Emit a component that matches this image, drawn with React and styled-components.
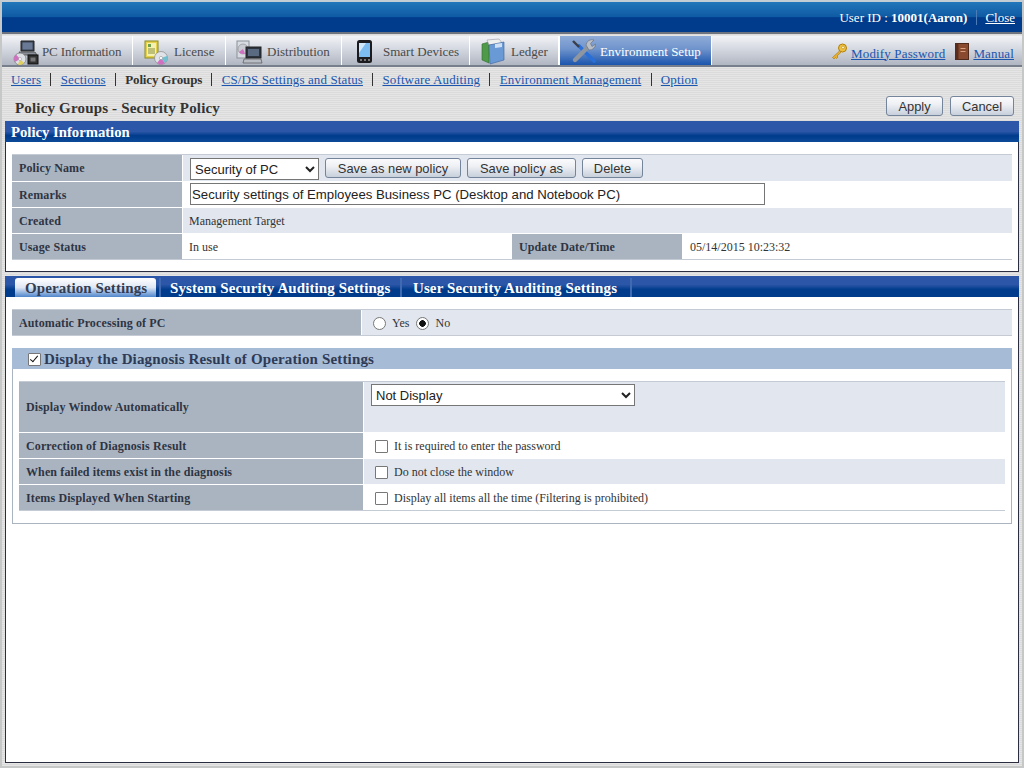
import React from "react";
import styled, { createGlobalStyle } from "styled-components";

const GlobalStyle = createGlobalStyle`
  html, body { margin: 0; padding: 0; background: #dfe0df; }
  body { font-family: "Liberation Serif", "Times New Roman", serif; font-size: 12px; color: #333; }
  a { color: #1a56b0; }
`;

const Page = styled.div`
  width: 1024px;
  height: 768px;
  box-sizing: border-box;
  overflow: hidden;
  display: flex;
  flex-direction: column;
  border: 2px solid #c6c8c8;
  border-top-color: #c4ccd4;
  background: repeating-linear-gradient(0deg, #e4e5e4 0, #e4e5e4 1px, #dadbda 1px, #dadbda 2px);
`;

const TopBar = styled.div`
  height: 32px;
  box-sizing: border-box;
  display: flex;
  justify-content: flex-end;
  align-items: center;
  padding: 1px 7px 0 0;
  color: #fff;
  font-size: 13px;
  border-bottom: 2px solid #6d7480;
  background: linear-gradient(180deg, #2277ba 0, #0f5aa3 50%, #003b8c 52%, #003b8c 100%);
`;

const UserId = styled.span`
  b { font-weight: bold; }
`;

const BarDivider = styled.span`
  width: 1px;
  height: 15px;
  background: #4c7cb8;
  margin: 0 8px 0 9px;
`;

const CloseLink = styled.a`
  color: #fff;
`;

const TabBar = styled.div`
  margin-top: 2px;
  height: 31px;
  box-sizing: border-box;
  display: flex;
  align-items: stretch;
  border-bottom: 2px solid #777f8c;
  background: linear-gradient(180deg, #f2f3f7 0, #d4d8e0 45%, #b0b6c2 100%);
`;

const MainTab = styled.div`
  width: ${p => p.$w}px;
  box-sizing: border-box;
  display: flex;
  align-items: center;
  border-right: 1px solid #fff;
  border-left: ${p => (p.$active ? "1px solid #fff" : "none")};
  color: ${p => (p.$active ? "#fff" : "#4a4a4a")};
  font-size: 13px;
  letter-spacing: ${p => p.$track || 0}px;
  padding: 2px 0 0 ${p => p.$pad}px;
  position: relative;
  background: ${p =>
    p.$active
      ? "linear-gradient(180deg, #90acd8 0, #6f93cc 45%, #1a55ad 100%)"
      : "transparent"};
`;

const TabIcon = styled.svg`
  position: absolute;
  left: ${p => p.$left}px;
  top: 2px;
`;

const TabTools = styled.div`
  margin-left: auto;
  display: flex;
  align-items: center;
  padding: 2px 8px 0 0;
  font-size: 13px;
  letter-spacing: 0.15px;
`;

const ToolLink = styled.a`
  margin-left: ${p => p.$before}px;
  margin-right: ${p => p.$after || 0}px;
  padding-top: 4px;
`;

const SubNav = styled.div`
  height: 24px;
  box-sizing: border-box;
  display: flex;
  align-items: center;
  padding: 1px 0 0 9px;
  font-size: 13px;
  a { letter-spacing: 0.12px; }
`;

const SubItem = styled.span`
  font-weight: bold;
  color: #333;
  letter-spacing: -0.15px;
`;

const SubSep = styled.span`
  width: 1px;
  height: 13px;
  background: #333;
  margin: 0 9.25px;
`;

const TitleRow = styled.div`
  height: 30px;
  display: flex;
  align-items: center;
  justify-content: space-between;
  padding: 0 8px 0 13px;
`;

const PageTitle = styled.h1`
  margin: 0;
  padding-top: 4px;
  font-size: 15px;
  letter-spacing: 0.17px;
  font-weight: bold;
  color: #333;
`;

const TitleActions = styled.div`
  display: flex;
  gap: 7px;
`;

const Btn = styled.button`
  height: 20px;
  width: ${p => p.$w}px;
  padding: 0;
  border: 1px solid #74849a;
  border-radius: 3px;
  font-family: "Liberation Sans", Arial, sans-serif;
  font-size: 12.9px;
  color: #333;
  background: linear-gradient(180deg, #fbfbfc 0, #eef0f4 40%, #c8d0dc 100%);
`;

const SectionHead = styled.div`
  margin: 0 3px;
  height: 21px;
  box-sizing: border-box;
  padding: 1px 0 0 6px;
  display: flex;
  align-items: center;
  color: #fff;
  font-size: 14.7px;
  font-weight: bold;
  background: linear-gradient(180deg, #2c57a8 0, #2c57a8 50%, #003b8c 70%, #0c4a98 100%);
`;

const Panel = styled.div`
  margin: 0 3px;
  background: #fff;
  border-left: 1px solid #2a2e40;
  border-right: 1px solid #2a2e40;
  border-bottom: 1px solid #2a2e40;
  box-sizing: border-box;
  padding: 12px 6px 0;
  ${p => (p.$fill ? "flex: 1; margin-bottom: 3px;" : "height: 130px;")}
`;

const InfoTable = styled.div`
  border-top: 1px solid #c5cbd4;
  border-bottom: 1px solid #c5cbd4;
`;

const Row = styled.div`
  display: flex;
  box-sizing: border-box;
  height: ${p => p.$h || 26}px;
  background: ${p => (p.$alt ? "#e2e7ef" : "#fff")};
  & + & { border-top: 1px solid #fff; }
`;

const Label = styled.div`
  width: ${p => p.$w}px;
  flex: none;
  box-sizing: border-box;
  display: flex;
  align-items: center;
  padding: ${p => (p.$flat ? 0 : 2)}px 0 0 7px;
  background: #aab4c0;
  border-right: 1px solid #fff;
  color: #2e3444;
  font-weight: bold;
  font-size: 12px;
  letter-spacing: 0.12px;
`;

const Value = styled.div`
  flex: ${p => (p.$w ? `0 0 ${p.$w}px` : 1)};
  box-sizing: border-box;
  display: flex;
  align-items: ${p => (p.$top !== undefined ? "flex-start" : "center")};
  gap: ${p => p.$gap || 0}px;
  padding: ${p => p.$top ?? 2}px 0 0 ${p => p.$pad ?? 6}px;
  color: #333;
  font-size: 12px;
`;

const Select = styled.select`
  height: 22px;
  width: ${p => p.$w}px;
  font-family: "Liberation Sans", Arial, sans-serif;
  font-size: 13px;
  color: #222;
  background: #fff;
  border: 1px solid #767676;
  border-radius: 0;
  margin: 0;
`;

const TextInput = styled.input`
  width: 575px;
  height: 22px;
  box-sizing: border-box;
  padding: 0 1px;
  font-family: "Liberation Sans", Arial, sans-serif;
  font-size: 13.2px;
  color: #222;
  border: 1px solid #767676;
  margin: 0;
`;

const TabStrip = styled.div`
  margin: 4px 3px 0;
  height: 21px;
  box-sizing: border-box;
  padding: 2px 0 0 10px;
  display: flex;
  background: linear-gradient(180deg, #2c57a8 0, #2c57a8 40%, #003b8c 65%, #003b8c 100%);
`;

const PolicyTab = styled.div`
  height: 19px;
  box-sizing: border-box;
  display: flex;
  align-items: center;
  padding: 1px 0 0 ${p => p.$pad}px;
  width: ${p => p.$w}px;
  font-size: 15px;
  letter-spacing: 0.1px;
  font-weight: bold;
  color: ${p => (p.$active ? "#333c50" : "#fff")};
  border-right: ${p => (p.$active ? "none" : "2px solid #3f6ab2")};
  border-radius: ${p => (p.$active ? "3px 3px 0 0" : "0")};
  margin-right: ${p => (p.$active ? 3 : 0)}px;
  background: ${p =>
    p.$active ? "linear-gradient(180deg, #fff 0, #dfe7f4 50%, #4f86cc 100%)" : "transparent"};
  &:nth-child(2) { border-left: 2px solid #3f6ab2; }
`;

const RadioField = styled.label`
  display: inline-flex;
  align-items: center;
  gap: 6px;
  margin-right: 7px;
`;

const Radio = styled.input`
  appearance: none;
  margin: 0;
  width: 13px;
  height: 13px;
  border: 1px solid #777;
  border-radius: 50%;
  background: #fff;
  &:checked { background: radial-gradient(circle, #111 0, #111 3px, #fff 3.6px); }
`;

const Check = styled.input`
  appearance: none;
  position: relative;
  margin: 0 ${p => p.$gap ?? 6}px 0 0;
  width: 13px;
  height: 13px;
  box-sizing: border-box;
  border: 1px solid #777;
  border-radius: 1px;
  background: #fff;
  &:checked::after {
    content: "";
    position: absolute;
    left: 3px;
    top: 0;
    width: 4px;
    height: 8px;
    border: solid #111;
    border-width: 0 1.5px 1.5px 0;
    box-sizing: border-box;
    transform: rotate(40deg);
  }
`;

const GroupBox = styled.div`
  margin-top: 12px;
  height: 176px;
  box-sizing: border-box;
  border: 1px solid #aab4c0;
  border-top: none;
`;

const GroupHead = styled.div`
  height: 21px;
  box-sizing: border-box;
  margin: 0 -1px;
  display: flex;
  align-items: center;
  padding: 1px 0 0 16px;
  background: #a5bbd6;
  color: #2e3a55;
  font-size: 15px;
  letter-spacing: 0.15px;
  font-weight: bold;
  label { display: flex; align-items: center; }
`;

const GroupInner = styled.div`
  margin: 12px 6px 0;
`;

const KeyIcon = () => (
  <svg width="17" height="17" viewBox="0 0 17 17">
    <circle cx="11.5" cy="5" r="4" fill="#f0c040" stroke="#b08010" />
    <circle cx="12" cy="4.5" r="1.4" fill="#fff7c8" stroke="#b08010" strokeWidth="0.6" />
    <path d="M8.5 8 L1.5 14.5 L3 16 L4.5 14.5 L5.5 15.5 L7 14 L6 13 L10 9.3 Z" fill="#e8b030" stroke="#b08010" strokeWidth="0.7" />
  </svg>
);

const BookIcon = () => (
  <svg width="14" height="17" viewBox="0 0 14 17">
    <rect x="0.5" y="0.5" width="13" height="16" fill="#8a4a30" stroke="#4d2a1c" />
    <rect x="0.5" y="0.5" width="3" height="16" fill="#5a2e1e" />
    <rect x="5.5" y="5" width="5" height="1" fill="#d8a080" />
    <rect x="5.5" y="8" width="5" height="1" fill="#d8a080" />
  </svg>
);

const PcIcon = () => (
  <TabIcon $left={10} width="28" height="28" viewBox="0 0 28 28">
    <path d="M9 3 H22 V13 H9 Z" fill="#3a4250" stroke="#222" />
    <rect x="10.5" y="4.5" width="10" height="7" fill="#6a7a96" />
    <path d="M7 14 H23 L25 17 H9 Z" fill="#8a8f98" stroke="#444" strokeWidth="0.7" />
    <circle cx="8" cy="21" r="6" fill="#dcdfe4" stroke="#777" strokeWidth="0.7" />
    <path d="M8 21 L4 16.5 A6 6 0 0 0 3 24 Z" fill="#d070c0" />
    <path d="M8 21 L12 25 A6 6 0 0 1 6 26.6 Z" fill="#e0d060" />
    <circle cx="8" cy="21" r="1.5" fill="#fff" stroke="#888" strokeWidth="0.5" />
    <rect x="16" y="17" width="10" height="9" fill="#333" stroke="#111" />
    <rect x="18.5" y="19.5" width="5" height="4" fill="#777" />
  </TabIcon>
);

const LicenseIcon = () => (
  <TabIcon $left={11} width="26" height="28" viewBox="0 0 26 28">
    <rect x="1" y="3" width="13" height="17" fill="#e6d24a" stroke="#8a8a20" />
    <rect x="3" y="5" width="9" height="13" fill="#f4f0b0" />
    <rect x="4" y="6" width="3" height="3" fill="#70a050" />
    <path d="M4 11 H11 M4 13 H11 M4 15 H11" stroke="#8a9040" />
    <circle cx="17" cy="20" r="6.5" fill="#dfe2e6" stroke="#888" strokeWidth="0.7" />
    <path d="M17 20 L13 25 A6.5 6.5 0 0 0 21 25 Z" fill="#d070c0" />
    <path d="M17 20 L21 25 A6.5 6.5 0 0 0 23 18 Z" fill="#70c0d0" />
    <circle cx="17" cy="20" r="1.6" fill="#fff" stroke="#888" strokeWidth="0.5" />
  </TabIcon>
);

const DistributionIcon = () => (
  <TabIcon $left={10} width="28" height="28" viewBox="0 0 28 28">
    <rect x="1" y="3" width="12" height="17" fill="#d8dce2" stroke="#8a8f98" />
    <circle cx="7" cy="11" r="5" fill="#c8ccd2" stroke="#888" strokeWidth="0.6" />
    <path d="M7 11 L3 14 A5 5 0 0 0 9 15.6 Z" fill="#d070c0" />
    <rect x="10" y="9" width="15" height="11" fill="#2c3440" stroke="#222" />
    <rect x="12" y="11" width="11" height="7" fill="#5a6a80" />
    <path d="M8 21 H25 L26 25 H7 Z" fill="#b8bcc4" stroke="#555" strokeWidth="0.7" />
  </TabIcon>
);

const PhoneIcon = () => (
  <TabIcon $left={14} width="18" height="26" viewBox="0 0 18 26">
    <rect x="1" y="2" width="15" height="23" rx="2.5" fill="#1c1c20" />
    <path d="M3 5 H14 V19 H3 Z" fill="#7cbcf0" />
    <path d="M3 5 H10 L3 15 Z" fill="#cfe8fb" />
    <rect x="4" y="21" width="2" height="2" fill="#777" />
    <rect x="8" y="21" width="2" height="2" fill="#777" />
    <rect x="12" y="21" width="2" height="2" fill="#777" />
  </TabIcon>
);

const LedgerIcon = () => (
  <TabIcon $left={11} width="26" height="28" viewBox="0 0 26 28">
    <path d="M1 6 L8 4 V25 L1 22 Z" fill="#4f9a48" stroke="#2f6a30" strokeWidth="0.6" />
    <path d="M6 2 L18 1 L22 6 L8 7 Z" fill="#eef0ee" stroke="#99a" strokeWidth="0.6" />
    <path d="M8 7 L23 4 V22 L9 26 Z" fill="#6a9ad6" stroke="#3a5f9a" strokeWidth="0.6" />
    <path d="M14 6 L21 5 V9 L14 10 Z" fill="#cfe0f4" />
  </TabIcon>
);

const ToolsIcon = () => (
  <TabIcon $left={11} width="26" height="26" viewBox="0 0 26 26">
    <path d="M8 8 L23 23" stroke="#2a6fd8" strokeWidth="3.6" strokeLinecap="round" />
    <path d="M2 3 L8 9" stroke="#3a3f48" strokeWidth="2.4" />
    <path d="M17 9 L4 22" stroke="#8f96a0" strokeWidth="4.4" strokeLinecap="round" />
    <path d="M15 7 A6 6 0 0 1 23 2 L19.5 5.5 L21 8.5 L24.5 6 A6 6 0 0 1 18 12 Z" fill="#b8bec8" stroke="#666c76" strokeWidth="0.6" />
  </TabIcon>
);

const tabs = [
  { label: "PC Information", w: 131, pad: 40, icon: <PcIcon />, track: -0.14 },
  { label: "License", w: 93, pad: 41, icon: <LicenseIcon /> },
  { label: "Distribution", w: 116, pad: 41, icon: <DistributionIcon /> },
  { label: "Smart Devices", w: 128, pad: 41, icon: <PhoneIcon /> },
  { label: "Ledger", w: 89, pad: 41, icon: <LedgerIcon /> },
  { label: "Environment Setup", w: 153, pad: 40, icon: <ToolsIcon />, active: true },
];

const subLinks = [
  "Users",
  "Sections",
  "Policy Groups",
  "CS/DS Settings and Status",
  "Software Auditing",
  "Environment Management",
  "Option",
];

const App = () => {
  return (
    <Page>
      <GlobalStyle />
      <TopBar>
        <UserId>User ID : <b>10001(Aaron)</b></UserId>
        <BarDivider />
        <CloseLink href="#">Close</CloseLink>
      </TopBar>
      <TabBar>
        {tabs.map(t => (
          <MainTab key={t.label} $w={t.w} $pad={t.pad} $active={t.active} $track={t.track}>
            {t.icon}
            {t.label}
          </MainTab>
        ))}
        <TabTools>
          <KeyIcon />
          <ToolLink href="#" $before={3} $after={10}>Modify Password</ToolLink>
          <BookIcon />
          <ToolLink href="#" $before={4}>Manual</ToolLink>
        </TabTools>
      </TabBar>
      <SubNav>
        {subLinks.map((s, i) => (
          <React.Fragment key={s}>
            {i > 0 && <SubSep />}
            {s === "Policy Groups" ? <SubItem>{s}</SubItem> : <a href="#">{s}</a>}
          </React.Fragment>
        ))}
      </SubNav>
      <TitleRow>
        <PageTitle>Policy Groups - Security Policy</PageTitle>
        <TitleActions>
          <Btn $w={57}>Apply</Btn>
          <Btn $w={64}>Cancel</Btn>
        </TitleActions>
      </TitleRow>
      <SectionHead>Policy Information</SectionHead>
      <Panel>
        <InfoTable>
          <Row $alt>
            <Label $w={171} $flat>Policy Name</Label>
            <Value $gap={6} $pad={7} $top={3}>
              <Select $w={129} defaultValue="a"><option value="a">Security of PC</option></Select>
              <Btn $w={136}>Save as new policy</Btn>
              <Btn $w={109}>Save policy as</Btn>
              <Btn $w={61}>Delete</Btn>
            </Value>
          </Row>
          <Row>
            <Label $w={171}>Remarks</Label>
            <Value $pad={7} $top={1}><TextInput readOnly value="Security settings of Employees Business PC (Desktop and Notebook PC)" /></Value>
          </Row>
          <Row $alt>
            <Label $w={171}>Created</Label>
            <Value>Management Target</Value>
          </Row>
          <Row>
            <Label $w={171}>Usage Status</Label>
            <Value $w={329}>In use</Value>
            <Label $w={171}>Update Date/Time</Label>
            <Value $pad={7}>05/14/2015 10:23:32</Value>
          </Row>
        </InfoTable>
      </Panel>
      <TabStrip>
        <PolicyTab $active $w={141} $pad={10}>Operation Settings</PolicyTab>
        <PolicyTab $w={243} $pad={9}>System Security Auditing Settings</PolicyTab>
        <PolicyTab $w={230} $pad={11}>User Security Auditing Settings</PolicyTab>
      </TabStrip>
      <Panel $fill>
        <InfoTable>
          <Row $alt $h={25}>
            <Label $w={350}>Automatic Processing of PC</Label>
            <Value $pad={11}>
              <RadioField><Radio type="radio" name="auto" />Yes</RadioField>
              <RadioField><Radio type="radio" name="auto" defaultChecked />No</RadioField>
            </Value>
          </Row>
        </InfoTable>
        <GroupBox>
          <GroupHead>
            <label><Check type="checkbox" $gap={3} defaultChecked />Display the Diagnosis Result of Operation Settings</label>
          </GroupHead>
          <GroupInner>
            <InfoTable>
              <Row $alt $h={50}>
                <Label $w={345} $flat>Display Window Automatically</Label>
                <Value $pad={7} $top={2}>
                  <Select $w={264} defaultValue="n"><option value="n">Not Display</option></Select>
                </Value>
              </Row>
              <Row>
                <Label $w={345}>Correction of Diagnosis Result</Label>
                <Value $pad={11}><Check type="checkbox" />It is required to enter the password</Value>
              </Row>
              <Row $alt>
                <Label $w={345}>When failed items exist in the diagnosis</Label>
                <Value $pad={11}><Check type="checkbox" />Do not close the window</Value>
              </Row>
              <Row>
                <Label $w={345}>Items Displayed When Starting</Label>
                <Value $pad={11}><Check type="checkbox" />Display all items all the time (Filtering is prohibited)</Value>
              </Row>
            </InfoTable>
          </GroupInner>
        </GroupBox>
      </Panel>
    </Page>
  );
};

export default App;
